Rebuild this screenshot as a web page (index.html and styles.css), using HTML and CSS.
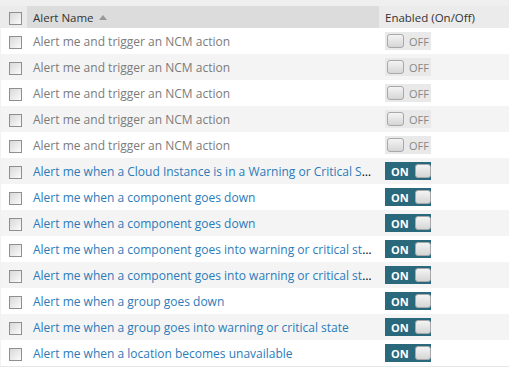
FILE: index.html
```html
<!DOCTYPE html>
<html lang="en">
<head>
  <meta charset="UTF-8" />
  <title>Alerts</title>
  <link rel="stylesheet" href="styles.css">
</head>
<body>
  <div class="page">
    <table class="alerts">
      <colgroup>
        <col class="col-check">
        <col class="col-name">
        <col class="col-enabled">
      </colgroup>
      <thead>
        <tr>
          <th class="check-cell"><span class="checkbox"></span></th>
          <th class="name-head">Alert Name <span class="sort-arrow"></span></th>
          <th class="enabled-head">Enabled (On/Off)</th>
        </tr>
      </thead>
      <tbody id="rows"></tbody>
    </table>
  </div>

  <script>
    const alerts = [
      ["Alert me and trigger an NCM action", false],
      ["Alert me and trigger an NCM action", false],
      ["Alert me and trigger an NCM action", false],
      ["Alert me and trigger an NCM action", false],
      ["Alert me and trigger an NCM action", false],
      ["Alert me when a Cloud Instance is in a Warning or Critical State", true],
      ["Alert me when a component goes down", true],
      ["Alert me when a component goes down", true],
      ["Alert me when a component goes into warning or critical state", true],
      ["Alert me when a component goes into warning or critical state", true],
      ["Alert me when a group goes down", true],
      ["Alert me when a group goes into warning or critical state", true],
      ["Alert me when a location becomes unavailable", true]
    ];

    const tbody = document.getElementById("rows");
    alerts.forEach(([name, on]) => {
      const tr = document.createElement("tr");
      tr.className = on ? "is-on" : "is-off";
      tr.innerHTML = `
        <td class="check-cell"><span class="checkbox"></span></td>
        <td class="name-cell"><span class="name">${name}</span></td>
        <td class="enabled-cell">
          ${on
            ? '<span class="toggle on"><span class="label">ON</span><span class="knob"></span></span>'
            : '<span class="toggle off"><span class="knob"></span><span class="label">OFF</span></span>'}
        </td>`;
      tbody.appendChild(tr);
    });
  </script>
</body>
</html>
```

FILE: styles.css
```css
body {
  margin: 0;
  font-family: 'Open Sans', 'Liberation Sans', sans-serif;
  font-size: 12px;
  background: #fff;
}

.page {
  padding-top: 6px;
  background: #efefef;
}

.alerts {
  width: 100%;
  border-collapse: collapse;
  table-layout: fixed;
  background: #fff;
}

.col-check { width: 27px; }
.col-name { width: 352px; }

th {
  height: 22px;
  padding: 0;
  font-size: 11.5px;
  font-weight: normal;
  text-align: left;
  color: #333;
  background: #ebebeb;
}

th.name-head {
  background: #dcdcdc;
  padding-left: 6px;
}

th.enabled-head {
  padding-left: 6px;
}

.sort-arrow {
  display: inline-block;
  width: 0;
  height: 0;
  margin-left: 2px;
  border-left: 4px solid transparent;
  border-right: 4px solid transparent;
  border-bottom: 5px solid #999;
  vertical-align: 2px;
}

td {
  height: 26px;
  padding: 0;
}

tbody tr:nth-child(even) td {
  background: #f4f4f4;
}

tbody tr:last-child td {
  border-bottom: 1px solid #e6e6e6;
}

.check-cell {
  text-align: center;
  padding-left: 3px;
  box-shadow: inset 1px 0 0 #f2f2f2;
}

th.check-cell {
  box-shadow: none;
}

.checkbox {
  display: inline-block;
  width: 11px;
  height: 11px;
  border: 1px solid #8f8f8f;
  background: linear-gradient(135deg, #d8d8d8, #fbfbfb);
  vertical-align: middle;
}

.name-cell {
  padding: 0 7px 0 6px;
  white-space: nowrap;
  overflow: hidden;
  text-overflow: ellipsis;
}

.is-off .name { color: #7b7b7b; }
.is-on .name { color: #2b7bb9; }

.enabled-cell {
  padding-left: 6px;
}

.toggle {
  display: inline-flex;
  align-items: center;
  width: 46px;
  height: 18px;
  box-sizing: border-box;
  vertical-align: middle;
  font-size: 11px;
}

.toggle .knob {
  width: 15px;
  height: 12px;
  border: 1px solid #a8a8a8;
  border-radius: 3px;
  background: linear-gradient(#f4f4f4, #d6d6d6);
}

.toggle.off {
  background: #e9e9e9;
  padding-left: 2px;
}

.toggle.off .label {
  color: #888;
  margin-left: 5px;
}

.toggle.on {
  background: #2a687c;
  padding-left: 6px;
}

.toggle.on .label {
  color: #fff;
  font-weight: bold;
  margin-right: 6px;
}
```
